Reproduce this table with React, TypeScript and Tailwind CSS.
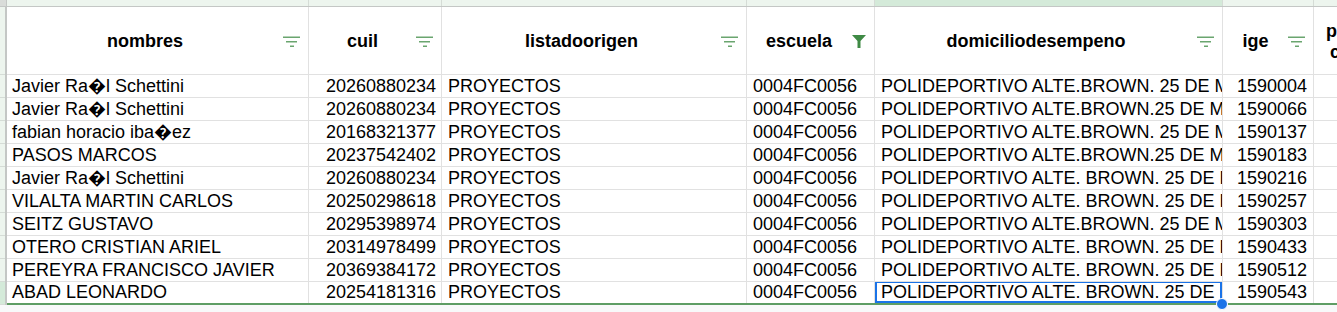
import React from "react";

const rows: [string, string, string, string, string, string][] = [
  ["Javier Ra\uFFFDl Schettini", "20260880234", "PROYECTOS", "0004FC0056", "POLIDEPORTIVO ALTE.BROWN. 25 DE MAYO", "1590004"],
  ["Javier Ra\uFFFDl Schettini", "20260880234", "PROYECTOS", "0004FC0056", "POLIDEPORTIVO ALTE.BROWN.25 DE MAYO", "1590066"],
  ["fabian horacio iba\uFFFDez", "20168321377", "PROYECTOS", "0004FC0056", "POLIDEPORTIVO ALTE.BROWN. 25 DE MAYO", "1590137"],
  ["PASOS MARCOS", "20237542402", "PROYECTOS", "0004FC0056", "POLIDEPORTIVO ALTE.BROWN.25 DE MAYO", "1590183"],
  ["Javier Ra\uFFFDl Schettini", "20260880234", "PROYECTOS", "0004FC0056", "POLIDEPORTIVO ALTE. BROWN. 25 DE MAYO", "1590216"],
  ["VILALTA MARTIN CARLOS", "20250298618", "PROYECTOS", "0004FC0056", "POLIDEPORTIVO ALTE. BROWN. 25 DE MAYO", "1590257"],
  ["SEITZ GUSTAVO", "20295398974", "PROYECTOS", "0004FC0056", "POLIDEPORTIVO ALTE.BROWN. 25 DE MAYO", "1590303"],
  ["OTERO CRISTIAN ARIEL", "20314978499", "PROYECTOS", "0004FC0056", "POLIDEPORTIVO ALTE. BROWN. 25 DE MAYO", "1590433"],
  ["PEREYRA FRANCISCO JAVIER", "20369384172", "PROYECTOS", "0004FC0056", "POLIDEPORTIVO ALTE. BROWN. 25 DE MAYO", "1590512"],
  ["ABAD LEONARDO", "20254181316", "PROYECTOS", "0004FC0056", "POLIDEPORTIVO ALTE. BROWN. 25 DE MAYO", "1590543"],
];

const widths = ["w-[302px]", "w-[133px]", "w-[305px]", "w-[128px]", "w-[348px]", "w-[91px]"];
const topBg = ["bg-[#edf5ee]", "bg-[#edf5ee]", "bg-[#edf5ee]", "bg-[#edf5ee]", "bg-[#d4ead9]", "bg-[#edf5ee]"];

function FilterLines() {
  return (
    <svg width="18" height="12" viewBox="0 0 18 12" className="shrink-0">
      <rect x="0" y="0.5" width="17" height="1.5" fill="#6aa56f" />
      <rect x="3" y="5" width="11" height="1.5" fill="#6aa56f" />
      <rect x="7" y="9.5" width="4" height="1.5" fill="#6aa56f" />
    </svg>
  );
}

function FilterFunnel() {
  return (
    <svg width="16" height="16" viewBox="0 0 16 16" className="shrink-0">
      <path d="M1 1 H15 L9.5 7 V14 H6.5 V7 Z" fill="#3f8a45" />
    </svg>
  );
}

function HeaderCell({ label, w, active }: { label: string; w: string; active?: boolean }) {
  return (
    <div className={`${w} shrink-0 h-full border-r border-[#e1e1e1] flex items-center pr-[7px] pt-[2px]`}>
      <div className="flex-1 text-center font-bold text-[18px] text-black">{label}</div>
      {active ? <FilterFunnel /> : <FilterLines />}
    </div>
  );
}

export default function App() {
  const font = { fontFamily: '"Liberation Sans", Arial, sans-serif' };
  return (
    <div className="w-[1337px] h-[312px] overflow-hidden bg-[#f8f9fa] relative" style={font}>
      {/* top column-header strip */}
      <div className="flex h-[7px] border-b border-[#c4c7c5]">
        <div className="w-[7px] shrink-0 h-full bg-[#d9dcd9] border-r border-[#c4c7c5]" />
        {widths.map((w, i) => (
          <div key={i} className={`${w} shrink-0 h-full ${topBg[i]} border-r border-[#d5dcd6]`} />
        ))}
        <div className="flex-1 h-full bg-[#edf5ee]" />
      </div>

      <div className="flex">
        {/* row header strip */}
        <div className="w-[7px] shrink-0 flex flex-col border-r-2 border-[#c4c7c5]">
          <div className="h-[68px] bg-[#edf5ee] border-b border-[#d5dcd6]" />
          {rows.map((_, i) => (
            <div
              key={i}
              className={`h-[23px] border-b border-[#d5dcd6] ${i === rows.length - 1 ? "bg-[#d4ead9]" : "bg-[#edf5ee]"}`}
            />
          ))}
        </div>

        {/* grid */}
        <div className="flex-1 flex flex-col bg-white">
          <div className="flex h-[68px] border-b border-[#e1e1e1]">
            <HeaderCell label="nombres" w={widths[0]} />
            <HeaderCell label="cuil" w={widths[1]} />
            <HeaderCell label="listadoorigen" w={widths[2]} />
            <HeaderCell label="escuela" w={widths[3]} active />
            <HeaderCell label="domiciliodesempeno" w={widths[4]} />
            <HeaderCell label="ige" w={widths[5]} />
            <div className="flex-1 h-full flex flex-col justify-center pl-[12px] pt-[2px] font-bold text-[18px] text-black leading-[21px] overflow-hidden whitespace-nowrap">
              <span>p</span>
              <span className="pl-[4px]">c</span>
            </div>
          </div>
          {rows.map((r, i) => {
            const last = i === rows.length - 1;
            return (
              <div
                key={i}
                className={`flex h-[23px] text-[18px] text-black leading-[22px] ${last ? "border-b-2 border-[#5e9d64]" : "border-b border-[#e1e1e1]"}`}
              >
                <div className={`${widths[0]} shrink-0 border-r border-[#e1e1e1] pl-[5px] whitespace-nowrap overflow-hidden flex items-end`}>{r[0]}</div>
                <div className={`${widths[1]} shrink-0 border-r border-[#e1e1e1] pr-[5px] whitespace-nowrap overflow-hidden flex items-end justify-end`}>{r[1]}</div>
                <div className={`${widths[2]} shrink-0 border-r border-[#e1e1e1] pl-[6px] whitespace-nowrap overflow-hidden flex items-end`}>{r[2]}</div>
                <div className={`${widths[3]} shrink-0 border-r border-[#e1e1e1] pl-[6px] whitespace-nowrap overflow-hidden flex items-end`}>{r[3]}</div>
                <div className={`${widths[4]} shrink-0 border-r border-[#e1e1e1] pl-[6px] whitespace-nowrap overflow-hidden flex items-end relative`}>
                  {r[4]}
                  {last && <div className="absolute inset-0 -top-px border-2 border-[#1a73e8]" />}
                </div>
                <div className={`${widths[5]} shrink-0 border-r border-[#e1e1e1] pr-[6px] whitespace-nowrap overflow-hidden flex items-end justify-end`}>{r[5]}</div>
                <div className="flex-1" />
              </div>
            );
          })}
        </div>
      </div>
      {/* selection handle */}
      <div className="absolute left-[1216px] top-[298px] w-[12px] h-[12px] rounded-full bg-[#1a73e8] border border-white" />
    </div>
  );
}
